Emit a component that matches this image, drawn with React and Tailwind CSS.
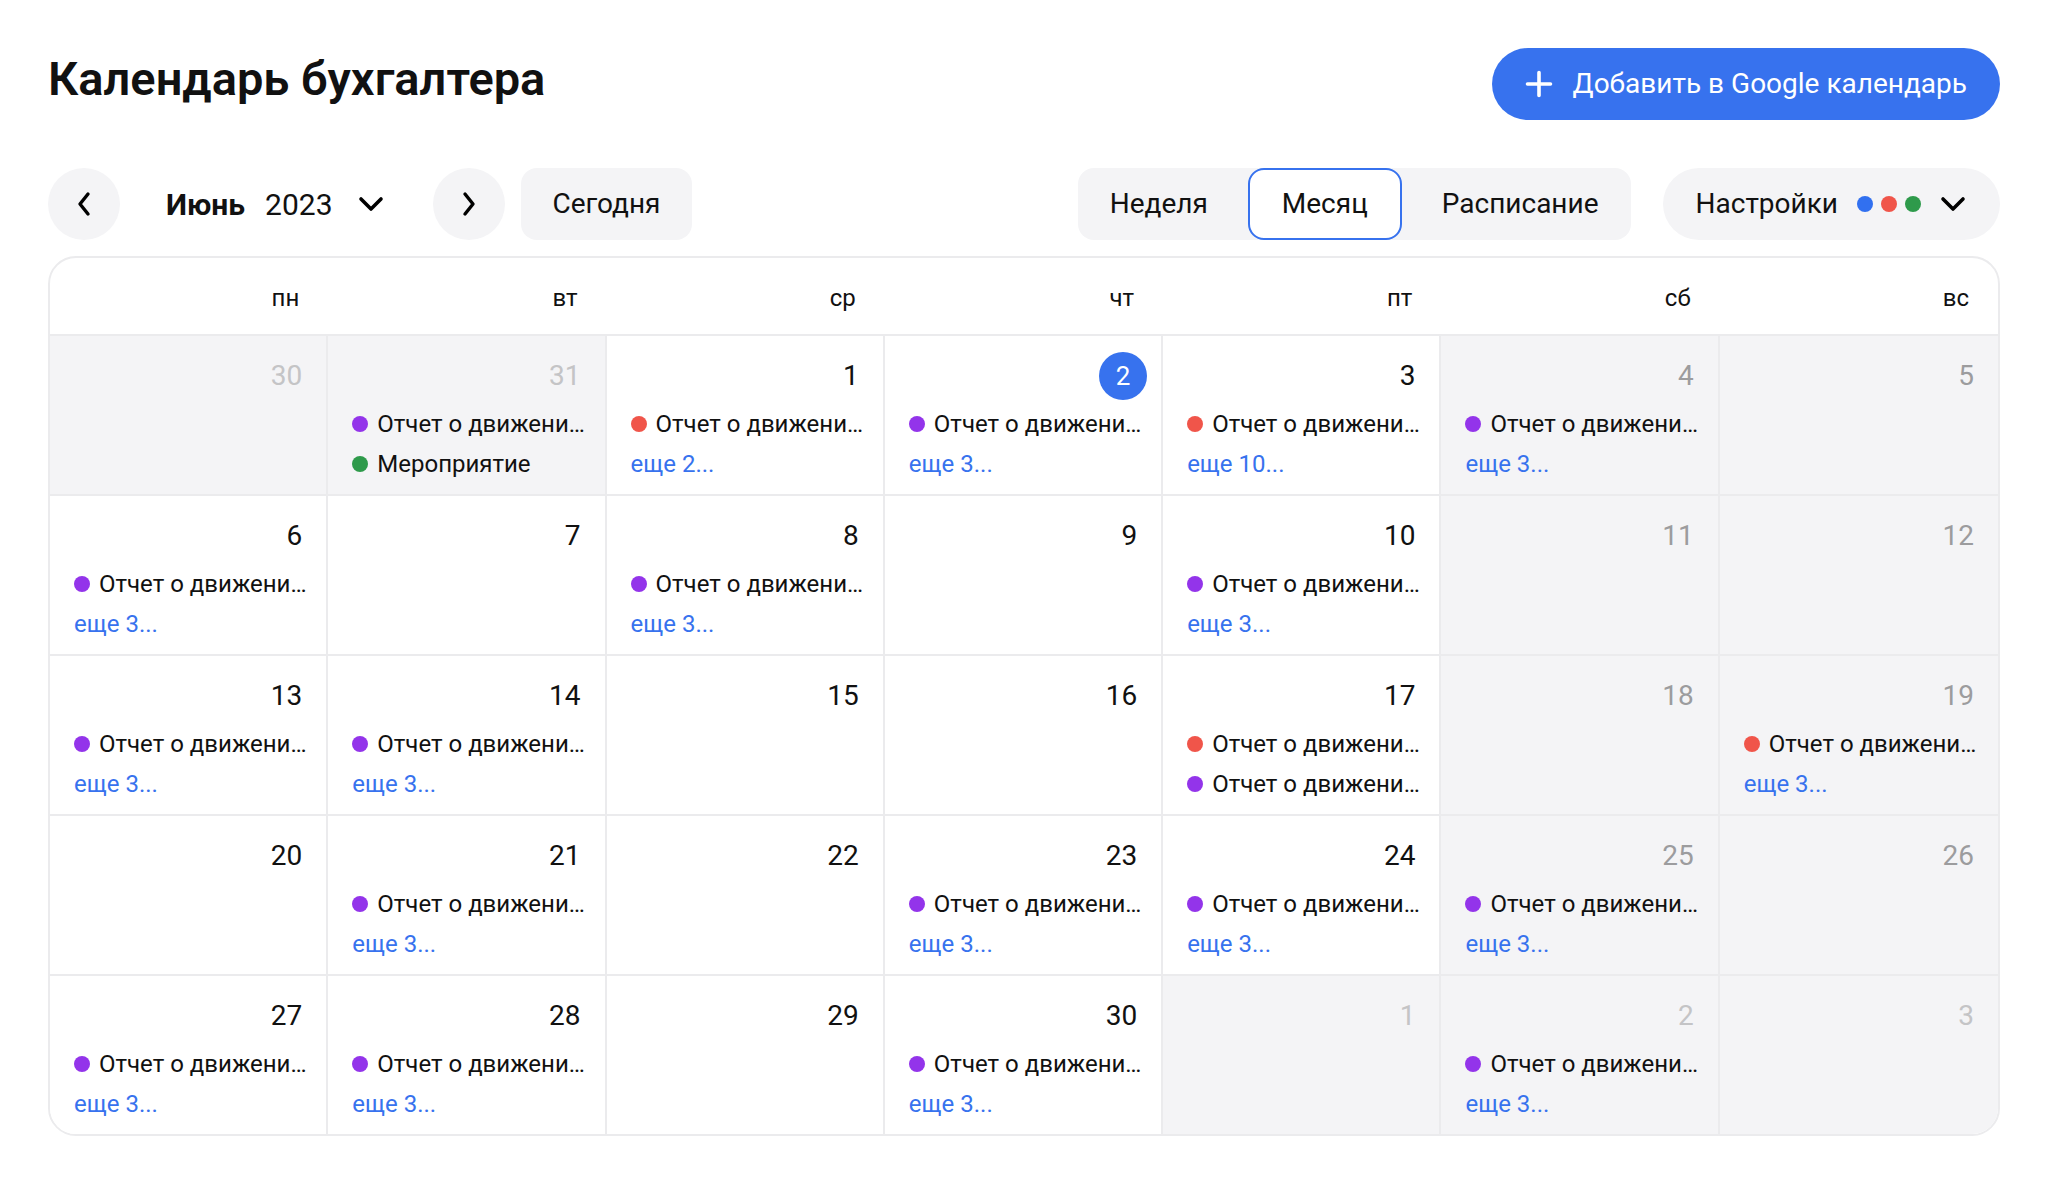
import React from 'react';

const PURPLE = 'bg-[#9334ea]';
const RED = 'bg-[#f0554a]';
const GREEN = 'bg-[#2e9a4b]';
const REPORT = 'Отчет о движении денежных средств';

// type: 'out' - другой месяц, 'off' - выходной, 'day' - рабочий
const weeks = [
  [
    { n: 30, type: 'out' },
    { n: 31, type: 'out', events: [[PURPLE, REPORT], [GREEN, 'Мероприятие']] },
    { n: 1, type: 'day', events: [[RED, REPORT]], more: 'еще 2...' },
    { n: 2, type: 'day', today: true, events: [[PURPLE, REPORT]], more: 'еще 3...' },
    { n: 3, type: 'day', events: [[RED, REPORT]], more: 'еще 10...' },
    { n: 4, type: 'off', events: [[PURPLE, REPORT]], more: 'еще 3...' },
    { n: 5, type: 'off' },
  ],
  [
    { n: 6, type: 'day', events: [[PURPLE, REPORT]], more: 'еще 3...' },
    { n: 7, type: 'day' },
    { n: 8, type: 'day', events: [[PURPLE, REPORT]], more: 'еще 3...' },
    { n: 9, type: 'day' },
    { n: 10, type: 'day', events: [[PURPLE, REPORT]], more: 'еще 3...' },
    { n: 11, type: 'off' },
    { n: 12, type: 'off' },
  ],
  [
    { n: 13, type: 'day', events: [[PURPLE, REPORT]], more: 'еще 3...' },
    { n: 14, type: 'day', events: [[PURPLE, REPORT]], more: 'еще 3...' },
    { n: 15, type: 'day' },
    { n: 16, type: 'day' },
    { n: 17, type: 'day', events: [[RED, REPORT], [PURPLE, REPORT]] },
    { n: 18, type: 'off' },
    { n: 19, type: 'off', events: [[RED, REPORT]], more: 'еще 3...' },
  ],
  [
    { n: 20, type: 'day' },
    { n: 21, type: 'day', events: [[PURPLE, REPORT]], more: 'еще 3...' },
    { n: 22, type: 'day' },
    { n: 23, type: 'day', events: [[PURPLE, REPORT]], more: 'еще 3...' },
    { n: 24, type: 'day', events: [[PURPLE, REPORT]], more: 'еще 3...' },
    { n: 25, type: 'off', events: [[PURPLE, REPORT]], more: 'еще 3...' },
    { n: 26, type: 'off' },
  ],
  [
    { n: 27, type: 'day', events: [[PURPLE, REPORT]], more: 'еще 3...' },
    { n: 28, type: 'day', events: [[PURPLE, REPORT]], more: 'еще 3...' },
    { n: 29, type: 'day' },
    { n: 30, type: 'day', events: [[PURPLE, REPORT]], more: 'еще 3...' },
    { n: 1, type: 'out' },
    { n: 2, type: 'out', events: [[PURPLE, REPORT]], more: 'еще 3...' },
    { n: 3, type: 'out' },
  ],
];

const weekdays = ['пн', 'вт', 'ср', 'чт', 'пт', 'сб', 'вс'];

const ChevronLeft = () => (
  <svg width="16" height="26" viewBox="0 0 16 26" fill="none">
    <path d="M12 3 L4 13 L12 23" stroke="#000" strokeWidth="3.4" strokeLinecap="round" strokeLinejoin="round" />
  </svg>
);

const ChevronRight = () => (
  <svg width="16" height="26" viewBox="0 0 16 26" fill="none">
    <path d="M4 3 L12 13 L4 23" stroke="#000" strokeWidth="3.4" strokeLinecap="round" strokeLinejoin="round" />
  </svg>
);

const ChevronDown = () => (
  <svg width="26" height="16" viewBox="0 0 26 16" fill="none">
    <path d="M3 3 L13 13 L23 3" stroke="#000" strokeWidth="3.6" strokeLinecap="round" strokeLinejoin="round" />
  </svg>
);

const DayCell = ({ day, col, lastRow }) => {
  const grey = day.type !== 'day';
  const numColor =
    day.type === 'out' ? 'text-[#c4c4c6]' : day.type === 'off' ? 'text-[#9c9c9e]' : 'text-[#111]';

  return (
    <div
      className={`min-w-0 pt-4 border-[#ebebed] ${grey ? 'bg-[#f4f4f6]' : 'bg-white'} ${
        col < 6 ? 'border-r-2' : ''
      } ${lastRow ? 'h-[158px]' : 'h-[160px] border-b-2'}`}
    >
      <div className="h-12 flex items-center justify-end pr-[24px]">
        {day.today ? (
          <span className="-mr-[10px] w-12 h-12 rounded-full bg-[#3772ee] text-white text-[26px] flex items-center justify-center">
            {day.n}
          </span>
        ) : (
          <span className={`text-[28px] leading-none ${numColor}`}>{day.n}</span>
        )}
      </div>
      <div className="mt-1 pl-6 pr-[18px]">
        {(day.events || []).map(([color, title], i) => (
          <div key={i} className="h-10 flex items-center gap-2 min-w-0">
            <span className={`w-4 h-4 rounded-full shrink-0 ${color}`} />
            <span className="truncate text-[24px] text-[#111] pl-px">{title}</span>
          </div>
        ))}
        {day.more && (
          <div className="h-10 flex items-center text-[24px] text-[#3772ee]">{day.more}</div>
        )}
      </div>
    </div>
  );
};

export default function App() {
  return (
    <div className="min-h-screen bg-white px-12 pt-12 font-['Roboto',sans-serif] text-[#111]">
      <div className="h-[72px] flex items-center justify-between">
        <h1 className="mb-[10px] text-[47px] leading-[56px] font-semibold">Календарь бухгалтера</h1>
        <button className="h-[72px] pl-[33px] pr-[33px] rounded-full bg-[#3772ee] text-white flex items-center gap-5 text-[28px]">
          <svg width="28" height="28" viewBox="0 0 28 28" fill="none">
            <path d="M14 2.5 V25.5 M2.5 14 H25.5" stroke="#fff" strokeWidth="3.6" strokeLinecap="round" />
          </svg>
          Добавить в Google календарь
        </button>
      </div>

      <div className="mt-12 h-[72px] flex items-center">
        <button className="w-[72px] h-[72px] rounded-full bg-[#f4f4f6] flex items-center justify-center">
          <ChevronLeft />
        </button>
        <button className="ml-[46px] mr-[49px] flex items-center text-[30px]">
          <span className="font-bold">Июнь</span>
          <span className="ml-[20px]">2023</span>
          <span className="ml-[25px]">
            <ChevronDown />
          </span>
        </button>
        <button className="w-[72px] h-[72px] rounded-full bg-[#f4f4f6] flex items-center justify-center">
          <ChevronRight />
        </button>
        <button className="ml-4 h-[72px] px-8 rounded-2xl bg-[#f4f4f6] text-[28px]">Сегодня</button>

        <div className="ml-auto flex items-center h-[72px] rounded-2xl bg-[#f4f4f6] gap-2">
          <button className="h-[72px] px-8 rounded-2xl text-[28px]">Неделя</button>
          <button className="h-[72px] px-8 rounded-2xl text-[28px] bg-white border-2 border-[#3772ee]">
            Месяц
          </button>
          <button className="h-[72px] px-8 rounded-2xl text-[28px]">Расписание</button>
        </div>

        <button className="ml-8 h-[72px] pl-[33px] pr-[34px] rounded-full bg-[#f4f4f6] flex items-center text-[28px]">
          Настройки
          <span className="ml-[19px] flex items-center gap-2">
            <span className="w-4 h-4 rounded-full bg-[#3170f0]" />
            <span className="w-4 h-4 rounded-full bg-[#f0554a]" />
            <span className="w-4 h-4 rounded-full bg-[#2e9a4b]" />
          </span>
          <span className="ml-[19px]">
            <ChevronDown />
          </span>
        </button>
      </div>

      <div className="mt-4 border-2 border-[#ebebed] rounded-[28px] overflow-hidden">
        <div className="grid grid-cols-7 h-[78px] border-b-2 border-[#ebebed]">
          {weekdays.map((d) => (
            <div key={d} className="flex items-center justify-end pr-[29px] text-[24px] pt-1">
              {d}
            </div>
          ))}
        </div>
        <div className="grid grid-cols-7">
          {weeks.map((week, r) =>
            week.map((day, c) => (
              <DayCell key={`${r}-${c}`} day={day} col={c} lastRow={r === weeks.length - 1} />
            ))
          )}
        </div>
      </div>
    </div>
  );
}
